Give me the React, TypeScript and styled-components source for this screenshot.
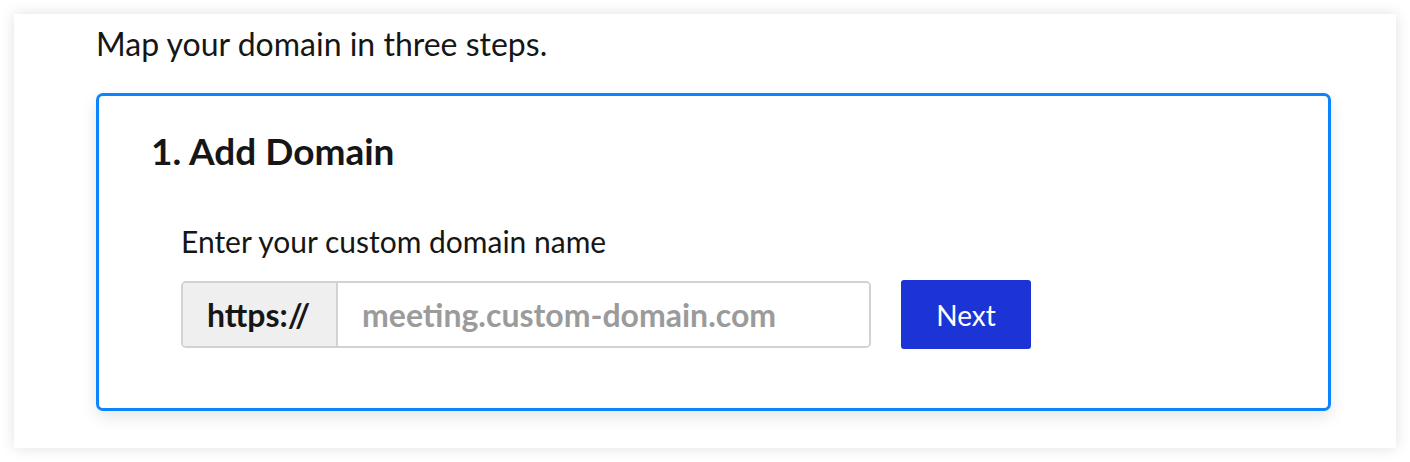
import styled, { createGlobalStyle } from "styled-components";

const GlobalStyle = createGlobalStyle`
  body {
    margin: 0;
    background: #ffffff;
    font-family: Lato, "Liberation Sans", sans-serif;
    color: #161616;
  }
`;

const Page = styled.div`
  padding: 14px;
`;

const Card = styled.div`
  height: 434px;
  box-sizing: border-box;
  padding: 11px 65px 37px 82px;
  background: #ffffff;
  box-shadow: 0 0 14px rgba(0, 0, 0, 0.12);
  display: flex;
  flex-direction: column;
`;

const Intro = styled.p`
  margin: 0 0 30px 0;
  font-size: 32px;
  line-height: 38px;
`;

const StepBox = styled.section`
  flex: 1;
  border: 3px solid #0a84ff;
  border-radius: 7px;
  box-shadow: 0 6px 16px rgba(0, 0, 0, 0.1);
  padding: 33px 52px 0;
`;

const StepTitle = styled.h2`
  margin: 0;
  font-size: 37px;
  font-weight: 700;
  line-height: 44px;
`;

const Field = styled.div`
  margin: 50px 0 0 30px;
`;

const Label = styled.label`
  display: block;
  font-size: 30px;
  line-height: 36px;
  margin-bottom: 21px;
`;

const Row = styled.div`
  display: flex;
  align-items: center;
  gap: 30px;
`;

const InputGroup = styled.div`
  display: flex;
  width: 690px;
  height: 67px;
  box-sizing: border-box;
  border: 2px solid #d2d2d2;
  border-radius: 5px;
  overflow: hidden;
`;

const Prefix = styled.span`
  width: 155px;
  flex: none;
  box-sizing: border-box;
  padding-left: 24px;
  display: flex;
  align-items: center;
  background: #efefef;
  border-right: 2px solid #d2d2d2;
  font-size: 32px;
  font-weight: 700;
  color: #161616;
`;

const DomainInput = styled.input`
  flex: 1;
  border: none;
  outline: none;
  padding: 0 0 0 24px;
  font-family: Lato, "Liberation Sans", sans-serif;
  font-size: 32px;
  font-weight: 700;
  color: #161616;

  &::placeholder {
    color: #9b9b9b;
  }
`;

const NextButton = styled.button`
  width: 130px;
  height: 69px;
  border: none;
  border-radius: 3px;
  background: #1c34d5;
  color: #ffffff;
  font-family: Lato, "Liberation Sans", sans-serif;
  font-size: 28px;
  cursor: pointer;
`;

export default function App() {
  return (
    <>
      <GlobalStyle />
      <Page>
        <Card>
          <Intro>Map your domain in three steps.</Intro>
          <StepBox>
            <StepTitle>1. Add Domain</StepTitle>
            <Field>
              <Label htmlFor="domain">Enter your custom domain name</Label>
              <Row>
                <InputGroup>
                  <Prefix>https://</Prefix>
                  <DomainInput id="domain" placeholder="meeting.custom-domain.com" />
                </InputGroup>
                <NextButton>Next</NextButton>
              </Row>
            </Field>
          </StepBox>
        </Card>
      </Page>
    </>
  );
}
